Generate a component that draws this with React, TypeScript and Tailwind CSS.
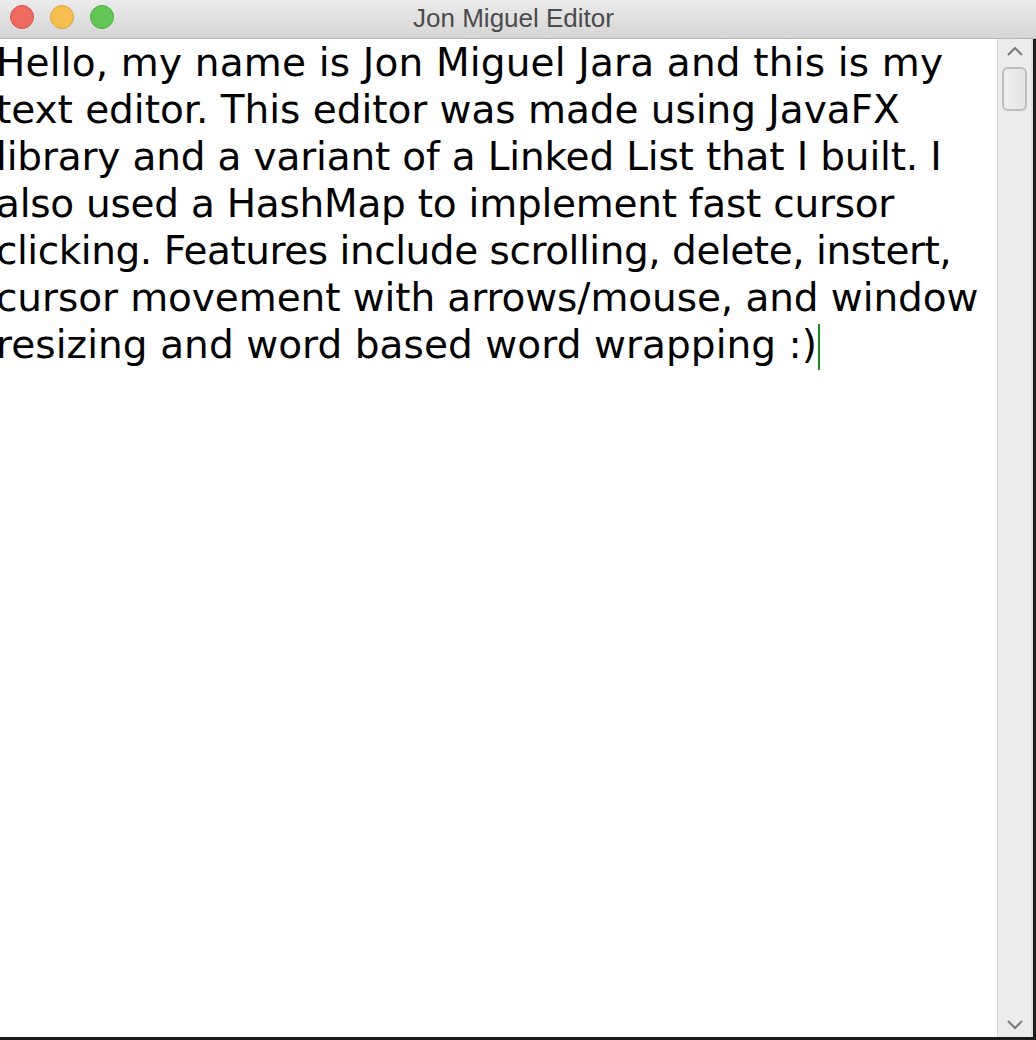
import React from "react";

const lines: { text: string; cls: string }[] = [
  { text: "Hello, my name is Jon Miguel Jara and this is my", cls: "tracking-[0.17px]" },
  { text: "text editor. This editor was made using JavaFX", cls: "tracking-[-0.04px]" },
  { text: "library and a variant of a Linked List that I built. I", cls: "tracking-[-0.17px]" },
  { text: "also used a HashMap to implement fast cursor", cls: "tracking-[-0.25px]" },
  { text: "clicking. Features include scrolling, delete, instert,", cls: "tracking-[-0.46px]" },
  { text: "cursor movement with arrows/mouse, and window", cls: "tracking-[-0.09px]" },
  { text: "resizing and word based word wrapping :)", cls: "tracking-[0.07px]" },
];

export default function App() {
  return (
    <div className="w-[1036px] h-[1040px] bg-white flex flex-col overflow-hidden">
      {/* title bar */}
      <div className="relative h-[39px] shrink-0 flex items-center justify-center bg-gradient-to-b from-[#ebebeb] to-[#d5d5d5] border-b border-[#b4b4b4]">
        <div className="absolute left-[10px] top-[5px] flex gap-[16px]">
          <div className="w-[24px] h-[24px] rounded-full bg-[#ee6a5f] border border-[#d5544a]" />
          <div className="w-[24px] h-[24px] rounded-full bg-[#f6be50] border border-[#dca23d]" />
          <div className="w-[24px] h-[24px] rounded-full bg-[#62c655] border border-[#4fab42]" />
        </div>
        <span
          className="text-[26px] text-[#4b4b4b] leading-none pb-[3px] ml-[-9px]"
          style={{ fontFamily: '"Liberation Sans", Arial, sans-serif' }}
        >
          Jon Miguel Editor
        </span>
      </div>
      {/* body */}
      <div className="flex flex-1 min-h-0">
        <div className="flex-1 relative overflow-hidden bg-white">
          <div
            className="ml-[-4px] mt-[0px] text-[39px] leading-[47px] text-black whitespace-pre"
            style={{ fontFamily: '"DejaVu Sans", Verdana, sans-serif' }}
          >
            {lines.map((l, i) => (
              <div key={i} className={l.cls}>
                {l.text}
                {i === lines.length - 1 && (
                  <span className="inline-block w-[2px] h-[46px] bg-[#1a8a1a] align-[-12px] ml-[1px]" />
                )}
              </div>
            ))}
          </div>
        </div>
        {/* scrollbar */}
        <div className="w-[39px] shrink-0 flex">
          <div className="w-[34px] flex flex-col items-center bg-[#ececec] border-l border-[#d6d6d6]">
            <svg width="18" height="12" viewBox="0 0 18 12" className="mt-[6px]">
              <path d="M2 10 L9 3 L16 10" fill="none" stroke="#7a7a7a" strokeWidth="2" />
            </svg>
            <div className="mt-[10px] w-[25px] h-[44px] rounded-[6px] border-2 border-[#bdbdbd] bg-gradient-to-r from-[#eeeeee] to-[#e4e4e4]" />
            <div className="flex-1" />
            <svg width="18" height="12" viewBox="0 0 18 12" className="mb-[6px]">
              <path d="M2 2 L9 9 L16 2" fill="none" stroke="#7a7a7a" strokeWidth="2" />
            </svg>
          </div>
          <div className="w-[2px] bg-[#dcdcdc]" />
          <div className="w-[3px] bg-[#1b1b1b]" />
        </div>
      </div>
      <div className="h-[3px] shrink-0 bg-[#1b1b1b]" />
    </div>
  );
}
